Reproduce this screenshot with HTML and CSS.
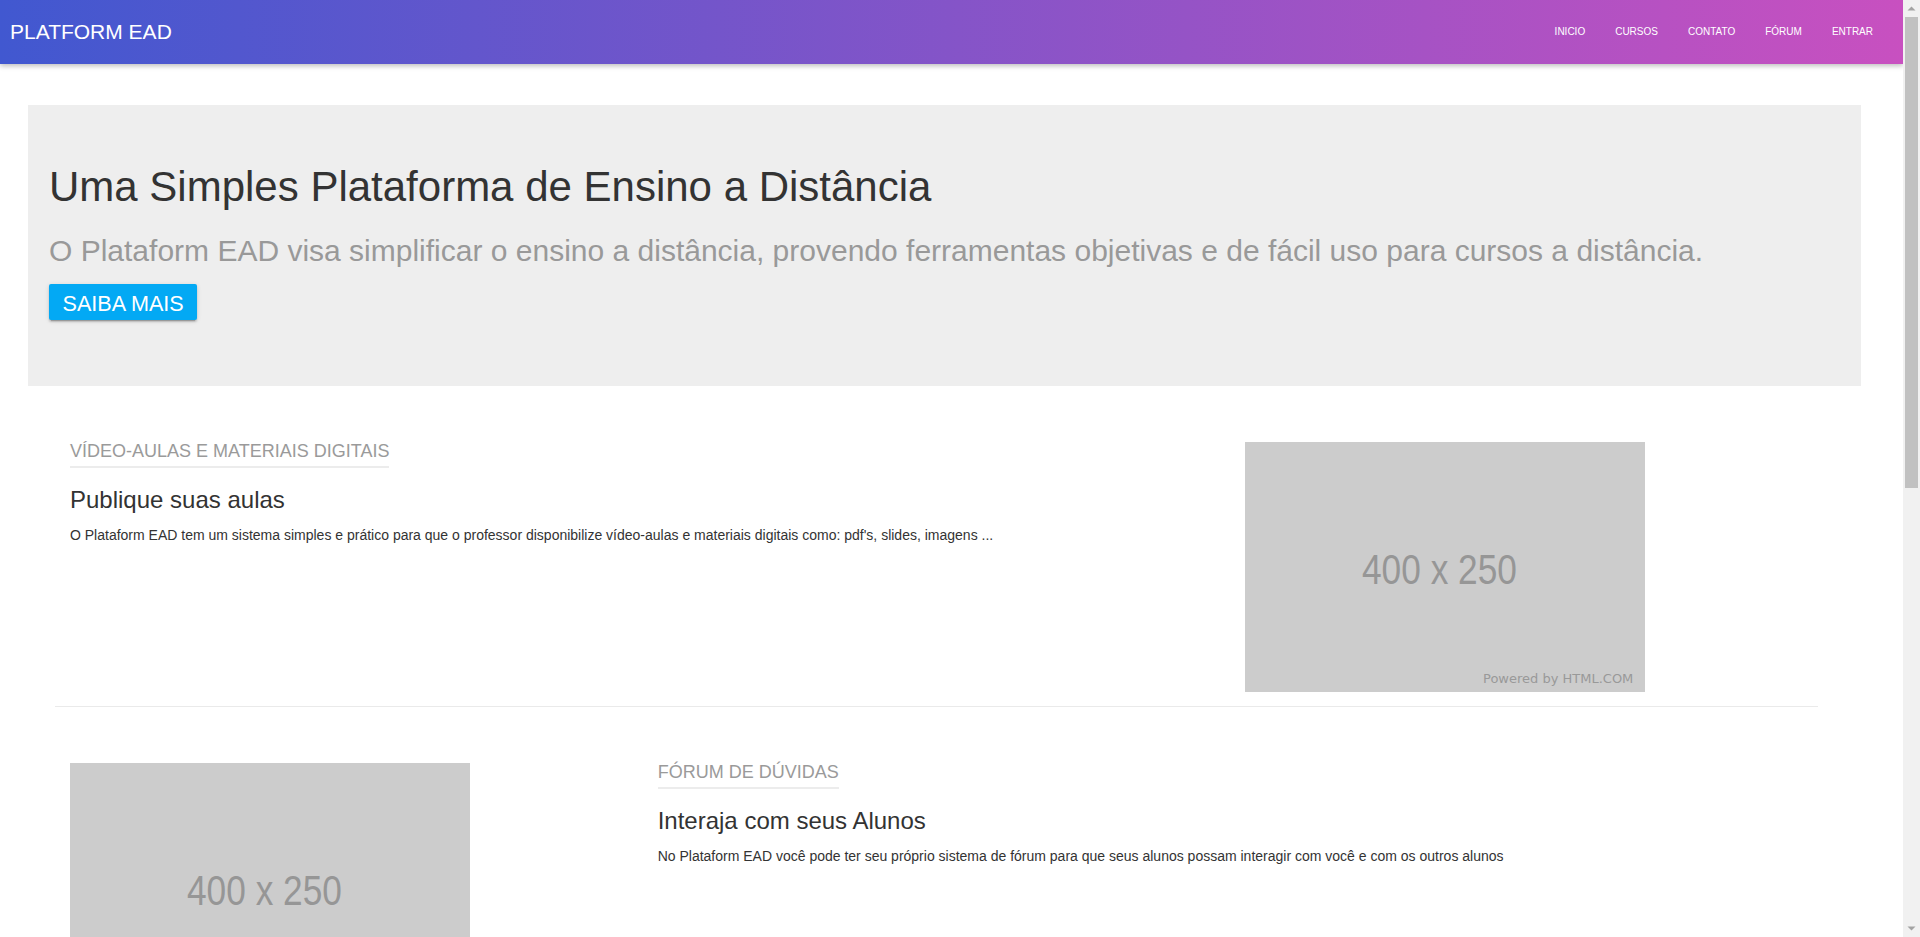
FILE: index.html
```html
<!DOCTYPE html>
<html lang="pt-BR">
<head>
<meta charset="utf-8">
<title>Platform EAD</title>
<link rel="stylesheet" href="styles.css">
</head>
<body>
<header class="navbar">
  <a class="brand" href="#">PLATFORM EAD</a>
  <nav class="nav-links">
    <a href="#">INICIO</a>
    <a href="#">CURSOS</a>
    <a href="#">CONTATO</a>
    <a href="#">FÓRUM</a>
    <a href="#">ENTRAR</a>
  </nav>
</header>
<main class="page">
  <section class="hero">
    <h1 class="hero-title">Uma Simples Plataforma de Ensino a Distância</h1>
    <p class="hero-lead">O Plataform EAD visa simplificar o ensino a distância, provendo ferramentas objetivas e de fácil uso para cursos a distância.</p>
    <a class="btn" href="#">SAIBA MAIS</a>
  </section>

  <section class="feature">
    <div class="feature-text">
      <h4 class="feature-label">VÍDEO-AULAS E MATERIAIS DIGITAIS</h4>
      <h3 class="feature-title">Publique suas aulas</h3>
      <p class="feature-desc">O Plataform EAD tem um sistema simples e prático para que o professor disponibilize vídeo-aulas e materiais digitais como: pdf's, slides, imagens ...</p>
    </div>
    <div class="feature-media">
      <div class="ph">
        <span class="ph-size">400 x 250</span>
        <span class="ph-credit">Powered by HTML.COM</span>
      </div>
    </div>
  </section>

  <hr class="divider">

  <section class="feature feature-reverse">
    <div class="feature-media">
      <div class="ph">
        <span class="ph-size">400 x 250</span>
        <span class="ph-credit">Powered by HTML.COM</span>
      </div>
    </div>
    <div class="feature-text">
      <h4 class="feature-label">FÓRUM DE DÚVIDAS</h4>
      <h3 class="feature-title">Interaja com seus Alunos</h3>
      <p class="feature-desc">No Plataform EAD você pode ter seu próprio sistema de fórum para que seus alunos possam interagir com você e com os outros alunos</p>
    </div>
  </section>

  <hr class="divider">
</main>

<div class="scrollbar" aria-hidden="true">
  <svg class="scroll-arrow" width="17" height="17" viewBox="0 0 17 17"><path d="M4.5 10.5 L8.5 6.5 L12.5 10.5 Z" fill="#a3a3a3"/></svg>
  <div class="scroll-track"><div class="scroll-thumb"></div></div>
  <svg class="scroll-arrow" width="17" height="17" viewBox="0 0 17 17"><path d="M4.5 6.5 L8.5 10.5 L12.5 6.5 Z" fill="#a3a3a3"/></svg>
</div>
</body>
</html>
```

FILE: styles.css
```css
body {
  margin: 0 17px 0 0;
  min-height: 1796px;
  font-family: "Liberation Sans", Arial, sans-serif;
  color: #333;
  background: #fff;
}

a {
  text-decoration: none;
}

/* Navbar */
.navbar {
  display: flex;
  align-items: center;
  justify-content: space-between;
  height: 64px;
  padding: 0 15px 0 10px;
  background: linear-gradient(to right, #4158d0, #c850c0);
  box-shadow: 0 2px 5px rgba(0, 0, 0, 0.26);
  position: relative;
  z-index: 2;
}

.brand {
  color: #fff;
  font-size: 21px;
  line-height: 64px;
}

.nav-links {
  display: flex;
}

.nav-links a {
  color: #fff;
  font-size: 10px;
  line-height: 64px;
  padding: 0 15px;
}

/* Hero */
.hero {
  margin: 41px 42px 0 28px;
  padding: 59px 21px 66px;
  background: #eee;
}

.hero-title {
  margin: 0;
  font-size: 42px;
  line-height: 46.2px;
  font-weight: normal;
  color: #333;
}

.hero-lead {
  margin: 20px 0 12px;
  font-size: 30px;
  line-height: 42px;
  color: #999;
}

.btn {
  display: block;
  width: fit-content;
  box-sizing: border-box;
  height: 36px;
  padding: 0 13.5px;
  line-height: 40px;
  font-size: 21.6px;
  color: #fff;
  background: #03a9f4;
  border-radius: 2px;
  overflow: hidden;
  box-shadow: 0 2px 2px rgba(0, 0, 0, 0.14), 0 1px 5px rgba(0, 0, 0, 0.12), 0 3px 1px -2px rgba(0, 0, 0, 0.2);
}

/* Feature rows */
.feature {
  display: grid;
  grid-template-columns: 2fr 1fr;
  margin: 54px 85px 0 55px;
}

.feature-reverse {
  grid-template-columns: 1fr 2fr;
}

.feature-text,
.feature-media {
  padding: 0 15px;
}

.feature-media {
  padding-top: 2px;
}

.feature-label {
  width: fit-content;
  margin: 0;
  padding-bottom: 4px;
  font-size: 18px;
  line-height: 22px;
  font-weight: normal;
  color: #9a9a9a;
  border-bottom: 2px solid #ececec;
}

.feature-title {
  margin: 18px 0 10px;
  font-size: 24px;
  line-height: 28.8px;
  font-weight: normal;
  color: #333;
}

.feature-desc {
  margin: 0;
  font-size: 14px;
  line-height: 20px;
  color: #333;
}

/* Placeholder image */
.ph {
  position: relative;
  width: 400px;
  height: 250px;
  box-sizing: border-box;
  padding: 4px 12px 0 0;
  display: flex;
  align-items: center;
  justify-content: center;
  background: #ccc;
}

.ph-size {
  display: inline-block;
  font-family: "Liberation Sans", sans-serif;
  font-size: 43px;
  line-height: 43px;
  color: #969696;
  transform: scaleX(0.82);
}

.ph-credit {
  position: absolute;
  right: 12px;
  bottom: 6px;
  font-family: "DejaVu Sans", sans-serif;
  font-size: 13px;
  line-height: 15px;
  color: #999;
}

.divider {
  margin: 14px 85px 0 55px;
  height: 0;
  border: 0;
  border-top: 1px solid #eaeaea;
}

/* Window scrollbar (drawn over the page edge) */
.scrollbar {
  position: fixed;
  top: 0;
  right: 0;
  width: 17px;
  height: 100vh;
  display: flex;
  flex-direction: column;
  background: #f1f1f1;
  z-index: 5;
}

.scroll-arrow {
  display: block;
  flex: none;
}

.scroll-track {
  flex: 1;
}

.scroll-thumb {
  height: 471px;
  margin: 0 2px;
  background: #c1c1c1;
}
```
